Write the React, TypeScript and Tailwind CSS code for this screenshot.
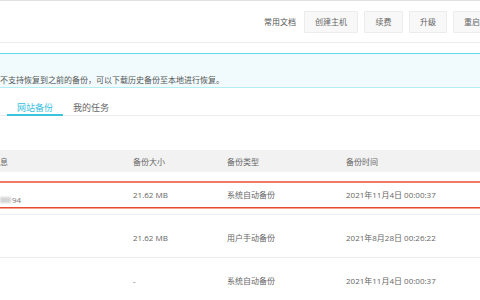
import React from "react";

const font = { fontFamily: '"Open Sans", "Noto Sans CJK SC", sans-serif' };

const rows = [
  { size: "21.62 MB", type: "系统自动备份", time: "2021年11月4日 00:00:37", first: true },
  { size: "21.62 MB", type: "用户手动备份", time: "2021年8月28日 00:26:22", first: false },
  { size: "-", type: "系统自动备份", time: "2021年11月4日 00:00:37", first: false },
];

export default function App() {
  return (
    <div
      className="relative w-[480px] h-[300px] overflow-hidden bg-white border-t border-[#e2e2e2] text-[8px] text-[#666]"
      style={font}
    >
      {/* header */}
      <div className="h-[42px] border-b border-[#ececec] flex items-center pl-[264px] whitespace-nowrap">
        <span className="text-[#555] mr-[8px]">常用文档</span>
        <div className="flex gap-[6px]">
          <div className="w-[54px] h-[22px] flex items-center justify-center bg-[#f8f8f8] border border-[#ececec] rounded-[1px]">创建主机</div>
          <div className="w-[39px] h-[22px] flex items-center justify-center bg-[#f8f8f8] border border-[#ececec] rounded-[1px]">续费</div>
          <div className="w-[38px] h-[22px] flex items-center justify-center bg-[#f8f8f8] border border-[#ececec] rounded-[1px]">升级</div>
          <div className="w-[38px] h-[22px] flex items-center justify-center bg-[#f8f8f8] border border-[#ececec] rounded-[1px] shrink-0">重启</div>
        </div>
      </div>

      {/* alert */}
      <div className="mt-[10px] h-[35px] bg-[#f1fbfd] border-t border-[#62dbe8] border-b border-b-[#b4edf4] flex items-end pb-[1px]">
        <span className="leading-[12px] whitespace-nowrap text-[#555]">不支持恢复到之前的备份，可以下载历史备份至本地进行恢复。</span>
      </div>

      {/* tabs */}
      <div className="mt-[10px] h-[18px] border-b border-[#ececec] flex pl-[7px] text-[9px]">
        <div className="px-[10px] h-[18px] border-b-[2px] border-[#3cc4de] text-[#35bfe0] leading-[14px] pt-[3px]">网站备份</div>
        <div className="px-[10px] h-[18px] text-[#666] leading-[14px] pt-[3px]">我的任务</div>
      </div>

      {/* table */}
      <div className="mt-[34px]">
        <div className="h-[22px] bg-[#f2f2f2] flex items-center whitespace-nowrap pt-[2px]">
          <div className="w-[133px]">息</div>
          <div className="w-[94px]">备份大小</div>
          <div className="w-[119px]">备份类型</div>
          <div className="flex-1">备份时间</div>
        </div>
        {rows.map((r, i) => (
          <div key={i} className="h-[43px] border-b border-[#ececec] flex items-center whitespace-nowrap pt-[3px]">
            <div className="w-[133px] relative self-stretch">
              {r.first && (
                <span className="absolute left-0 top-[19px] flex items-center text-[#777]">
                  <span className="inline-block w-[11px] h-[6px] bg-[#d4d4d4] blur-[1px]" />
                  <span className="ml-[1px]">94</span>
                </span>
              )}
            </div>
            <div className="w-[94px]">{r.size}</div>
            <div className="w-[119px]">{r.type}</div>
            <div className="flex-1">{r.time}</div>
          </div>
        ))}
      </div>

      {/* red annotation */}
      <div className="absolute left-0 right-0 top-[180px] h-[2px] bg-[#f27a62] pointer-events-none" />
      <div className="absolute left-0 right-0 top-[206px] h-[1px] bg-[#e64a34] pointer-events-none" />
      <div className="absolute left-0 right-0 top-[207px] h-[1px] bg-[#f5a193] pointer-events-none" />
    </div>
  );
}
